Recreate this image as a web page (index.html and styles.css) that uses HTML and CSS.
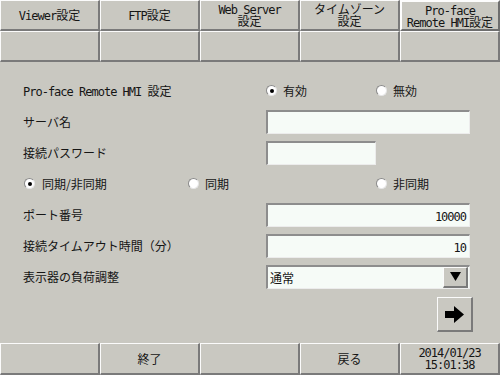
FILE: index.html
```html
<!DOCTYPE html>
<html lang="ja">
<head>
<meta charset="utf-8">
<title>Pro-face Remote HMI設定</title>
<link rel="stylesheet" href="styles.css">
</head>
<body>
<div class="screen">
  <div class="tabs">
    <div class="tab"><div class="txt"><span class="en">Viewer</span>設定</div></div>
    <div class="tab"><div class="txt"><span class="en">FTP</span>設定</div></div>
    <div class="tab"><div class="txt"><div class="ln"><span class="en">Web Server</span></div><div class="ln">設定</div></div></div>
    <div class="tab"><div class="txt"><div class="ln">タイムゾーン</div><div class="ln">設定</div></div></div>
    <div class="tab active"><div class="txt"><div class="ln"><span class="en">Pro-face</span></div><div class="ln"><span class="en">Remote HMI</span>設定</div></div></div>
    <div class="tab"></div>
    <div class="tab"></div>
    <div class="tab"></div>
    <div class="tab"></div>
    <div class="tab"></div>
  </div>

  <div class="main">
    <div class="row">
      <div class="label"><span class="en">Pro-face Remote HMI </span>設定</div>
      <div class="radio on w110"><span class="dot"></span>有効</div>
      <div class="radio"><span class="dot"></span>無効</div>
    </div>
    <div class="row">
      <div class="label">サーバ名</div>
      <div class="field"></div>
    </div>
    <div class="row">
      <div class="label">接続パスワード</div>
      <div class="field short"></div>
    </div>
    <div class="row">
      <div class="radio on w164 first"><span class="dot"></span>同期/非同期</div>
      <div class="radio w188"><span class="dot"></span>同期</div>
      <div class="radio"><span class="dot"></span>非同期</div>
    </div>
    <div class="row">
      <div class="label">ポート番号</div>
      <div class="field num"><span class="en">10000</span></div>
    </div>
    <div class="row">
      <div class="label">接続タイムアウト時間（分）</div>
      <div class="field num"><span class="en">10</span></div>
    </div>
    <div class="row">
      <div class="label">表示器の負荷調整</div>
      <div class="field select">
        <span>通常</span>
        <span class="dd">
          <svg width="11" height="9" viewBox="0 0 11 9"><polygon points="0,0 11,0 5.5,9" fill="#000"/></svg>
        </span>
      </div>
    </div>
    <div class="next-row">
      <div class="next">
        <svg width="19" height="17" viewBox="0 0 19 17"><polygon points="0,5 9,5 9,0 19,8.5 9,17 9,12 0,12" fill="#000"/></svg>
      </div>
    </div>
  </div>

  <div class="footer">
    <div class="tab"></div>
    <div class="tab"><div class="txt">終了</div></div>
    <div class="tab"></div>
    <div class="tab"><div class="txt">戻る</div></div>
    <div class="tab"><div class="txt en"><div class="ln">2014/01/23</div><div class="ln">15:01:38</div></div></div>
  </div>
</div>
</body>
</html>
```

FILE: styles.css
```css
body {
  margin: 0;
  background: #c9c8c1;
  font-family: "Noto Sans CJK JP", sans-serif;
  font-size: 12px;
  color: #151515;
}

.screen {
  width: 500px;
  height: 375px;
  display: flex;
  flex-direction: column;
}

.en {
  font-family: "DejaVu Sans Mono", "Liberation Mono", monospace;
  letter-spacing: -1px;
}

.tabs {
  display: grid;
  grid-template-columns: repeat(5, 100px);
  grid-auto-rows: 31px;
}

.tab {
  box-sizing: border-box;
  border-style: solid;
  border-width: 1px 2px 2px 1px;
  border-color: #fbfbfb #7a7a7a #7a7a7a #fbfbfb;
  display: flex;
  align-items: center;
  justify-content: center;
}

.txt {
  text-align: center;
  line-height: 12px;
  white-space: nowrap;
}

.ln {
  height: 12px;
  line-height: 12px;
}

.tab.active {
  border-width: 2px 2px 2px 2px;
  border-color: #fdfdfd #6e6e6e #6e6e6e #fdfdfd;
}

.main {
  flex: 1;
  padding: 13px 0 0 23px;
}

.row {
  height: 31px;
  display: flex;
  align-items: center;
}

.label {
  width: 243px;
}

.field {
  box-sizing: border-box;
  width: 204px;
  height: 24px;
  background: #f6fbf7;
  border-style: solid;
  border-width: 2px 1px 1px 2px;
  border-color: #8d8d8d #ececec #ececec #8d8d8d;
}

.field.short {
  width: 110px;
}

.field.num {
  text-align: right;
  padding-right: 3px;
  line-height: 21px;
}

.field.select {
  display: flex;
  align-items: center;
  justify-content: space-between;
  padding-left: 2px;
}

.dd {
  box-sizing: border-box;
  width: 25px;
  height: 21px;
  margin-right: 1px;
  background: #c9c8c1;
  border-style: solid;
  border-width: 1px 2px 2px 1px;
  border-color: #fbfbfb #7a7a7a #7a7a7a #fbfbfb;
  display: flex;
  align-items: center;
  justify-content: center;
}

.radio {
  display: flex;
  align-items: center;
  gap: 6px;
}

.w110 { width: 110px; }
.w164 { width: 164px; }
.w188 { width: 188px; }
.radio.first { margin-left: 1px; gap: 7px; }

.dot {
  position: relative;
  box-sizing: border-box;
  width: 11px;
  height: 11px;
  border-radius: 50%;
  background: #fff;
  border: 1px solid;
  border-color: #8a8a8a #e6e6e6 #e6e6e6 #8a8a8a;
}

.radio.on .dot::after {
  content: "";
  position: absolute;
  left: 2.5px;
  top: 2.5px;
  width: 4px;
  height: 4px;
  border-radius: 50%;
  background: #000;
}

.next-row {
  display: flex;
  justify-content: flex-end;
  padding-right: 27px;
  margin-top: 5px;
}

.next {
  box-sizing: border-box;
  width: 36px;
  height: 35px;
  border-style: solid;
  border-width: 1px 2px 2px 1px;
  border-color: #fbfbfb #7a7a7a #7a7a7a #fbfbfb;
  display: flex;
  align-items: center;
  justify-content: center;
}

.footer {
  display: grid;
  grid-template-columns: repeat(5, 100px);
  height: 32px;
}
```
